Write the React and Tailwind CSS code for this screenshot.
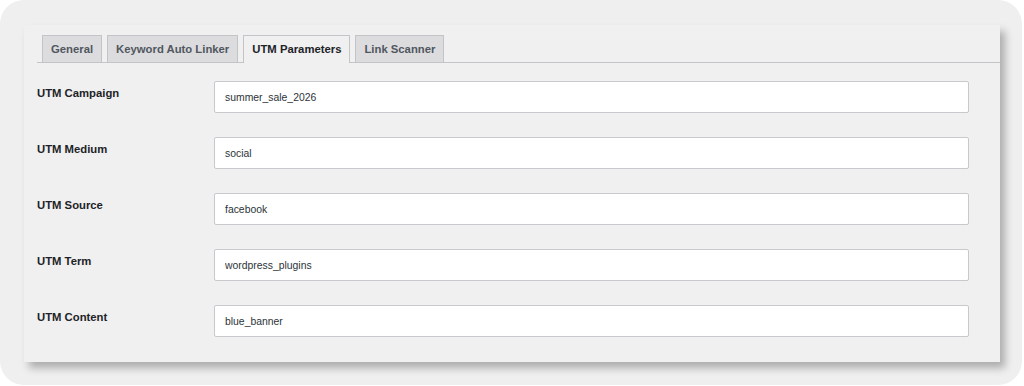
import React from 'react';

const tabs = [
  { label: 'General', active: false },
  { label: 'Keyword Auto Linker', active: false },
  { label: 'UTM Parameters', active: true },
  { label: 'Link Scanner', active: false },
];

const fields = [
  { label: 'UTM Campaign', value: 'summer_sale_2026' },
  { label: 'UTM Medium', value: 'social' },
  { label: 'UTM Source', value: 'facebook' },
  { label: 'UTM Term', value: 'wordpress_plugins' },
  { label: 'UTM Content', value: 'blue_banner' },
];

const App = () => {
  return (
    <div className="w-[1024px] h-[386px] bg-white font-['Liberation_Sans',Arial,sans-serif]">
      <div className="w-[1022px] h-[385px] rounded-[24px] bg-[#efefef] pt-[25px] pl-[24px]">
        {/* settings panel */}
        <div className="w-[976px] h-[337px] bg-[#f0f0f1] shadow-[5px_6px_8px_rgba(0,0,0,0.28)] pl-[13px] pt-[10px]">
          <div className="flex items-end gap-[5px] pl-[5px] border-b border-[#c3c4c7] h-[28px]">
            {tabs.map((tab) => (
              <div
                key={tab.label}
                className={
                  tab.active
                    ? 'h-[28px] -mb-px px-[8px] flex items-center border border-b-0 border-[#c3c4c7] bg-[#f0f0f1] text-[11.3px] font-bold text-[#1d2327]'
                    : 'h-[27px] px-[8px] flex items-center border border-b-0 border-[#c3c4c7] bg-[#dcdcde] text-[11.3px] font-bold text-[#50575e]'
                }
              >
                {tab.label}
              </div>
            ))}
          </div>

          <div className="flex flex-col pt-[6px]">
            {fields.map((field) => (
              <div key={field.label} className="flex h-[56px]">
                <div className="w-[177px] pt-[16px] text-[11.3px] font-bold text-[#1d2327]">
                  {field.label}
                </div>
                <div className="pt-[12px]">
                  <input
                    type="text"
                    readOnly
                    value={field.value}
                    className="w-[755px] h-[32px] bg-white border border-[#c8c9cc] rounded-[2px] px-[10px] text-[10.4px] text-[#2c3338] outline-none"
                  />
                </div>
              </div>
            ))}
          </div>
        </div>
      </div>
    </div>
  );
};

export default App;
